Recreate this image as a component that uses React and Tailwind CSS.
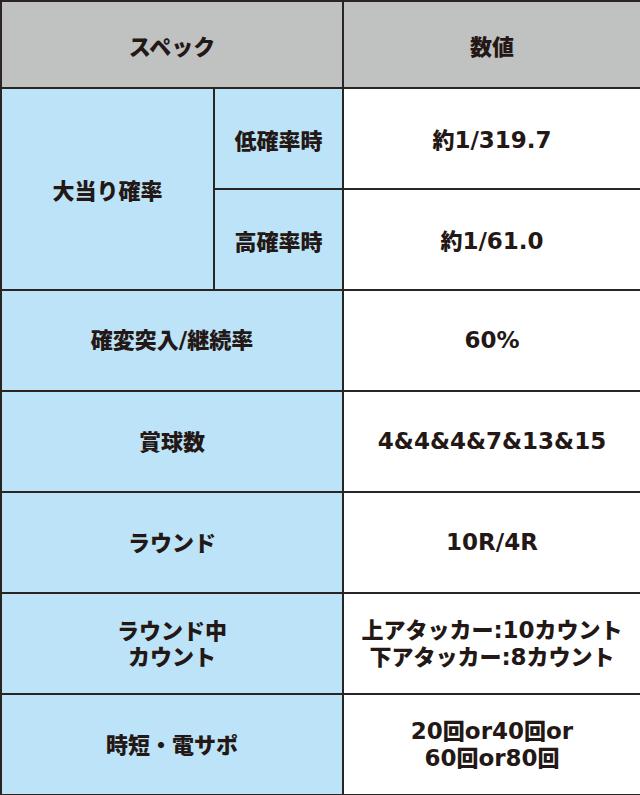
import React from 'react';

// Spec table — left column light blue, values on white
const rows = [
  { label: '確変突入/継続率', value: ['60%'] },
  { label: '賞球数', value: ['4&4&4&7&13&15'] },
  { label: 'ラウンド', value: ['10R/4R'] },
  { label: ['ラウンド中', 'カウント'], value: ['上アタッカー:10カウント', '下アタッカー:8カウント'] },
  { label: '時短・電サポ', value: ['20回or40回or', '60回or80回'] },
];

const cell = 'border-2 border-[#2a2422] text-center align-middle font-black';

// latin runs get a wider face so numbers read like the original
function Mixed({ text }) {
  const parts = text.split(/([\x21-\x7e]+)/).filter(Boolean);
  return parts.map((p, i) =>
    /^[\x21-\x7e]+$/.test(p) ? (
      <span
        key={i}
        className="text-[23px] leading-none font-bold"
        style={{ fontFamily: '"DejaVu Sans", sans-serif' }}
      >
        {p}
      </span>
    ) : (
      <span key={i}>{p}</span>
    )
  );
}

function Lines({ text }) {
  const list = Array.isArray(text) ? text : [text];
  return list.map((t, i) => (
    <div key={i}>
      <Mixed text={t} />
    </div>
  ));
}

export default function App() {
  return (
    <div
      className="w-[640px] h-[795px] bg-white text-[#231815] text-[22px] leading-[26px]"
      style={{ fontFamily: '"Noto Sans CJK JP", "Noto Sans", sans-serif' }}
    >
      <table className="w-[640px] border-collapse table-fixed">
        <colgroup>
          <col className="w-[213px]" />
          <col className="w-[129px]" />
          <col className="w-[298px]" />
        </colgroup>
        <tbody>
          <tr className="h-[87px]">
            <td colSpan={2} className={`${cell} bg-[#c0c1c1]`}>スペック</td>
            <td className={`${cell} bg-[#c0c1c1]`}>数値</td>
          </tr>
          <tr className="h-[101px]">
            <td rowSpan={2} className={`${cell} bg-[#bce3f7]`}>大当り確率</td>
            <td className={`${cell} bg-[#bce3f7]`}>低確率時</td>
            <td className={`${cell} bg-white`}>
              <Mixed text="約1/319.7" />
            </td>
          </tr>
          <tr className="h-[101px]">
            <td className={`${cell} bg-[#bce3f7]`}>高確率時</td>
            <td className={`${cell} bg-white`}>
              <Mixed text="約1/61.0" />
            </td>
          </tr>
          {rows.map((r, i) => (
            <tr key={i} className="h-[101px]">
              <td colSpan={2} className={`${cell} bg-[#bce3f7]`}>
                <div className="-mt-1">
                  <Lines text={r.label} />
                </div>
              </td>
              <td className={`${cell} bg-white`}>
                <div className="-mt-1">
                  <Lines text={r.value} />
                </div>
              </td>
            </tr>
          ))}
        </tbody>
      </table>
    </div>
  );
}
